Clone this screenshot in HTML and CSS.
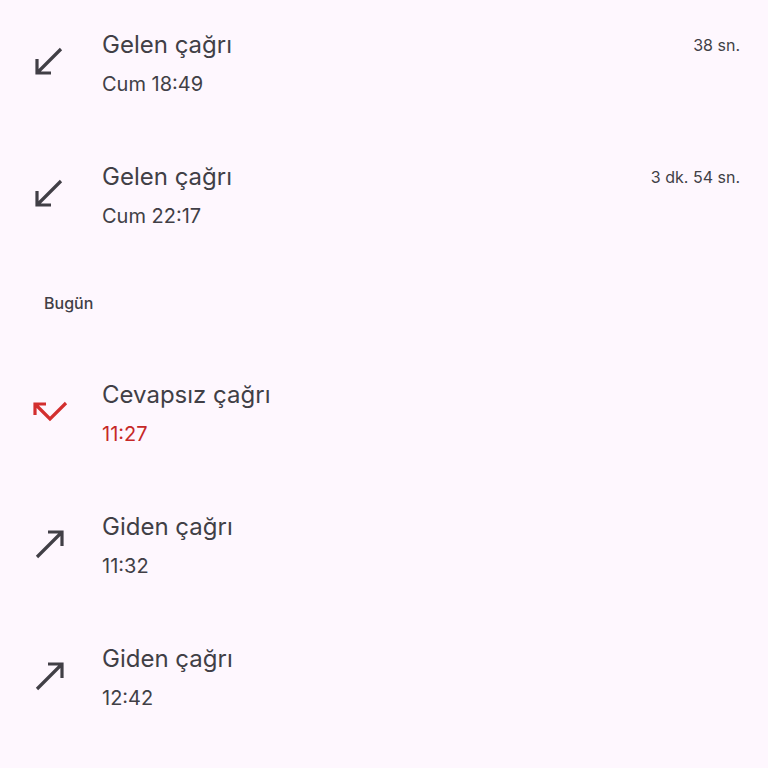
FILE: index.html
```html
<!DOCTYPE html>
<html lang="tr">
<head>
    <meta charset="UTF-8">
    <meta name="viewport" content="width=device-width, initial-scale=1.0">
    <title>Arama geçmişi</title>
    <link rel="stylesheet" href="styles.css">
</head>
<body>

<ul class="call-list">
    <li class="call">
        <svg class="call-icon" viewBox="0 0 36 36"><path d="M29 5 L5 29 M5 15 V29 H19"/></svg>
        <div class="call-text">
            <div class="call-title">Gelen çağrı</div>
            <div class="call-time">Cum 18:49</div>
        </div>
        <div class="call-duration">38 sn.</div>
    </li>
    <li class="call">
        <svg class="call-icon" viewBox="0 0 36 36"><path d="M29 5 L5 29 M5 15 V29 H19"/></svg>
        <div class="call-text">
            <div class="call-title">Gelen çağrı</div>
            <div class="call-time">Cum 22:17</div>
        </div>
        <div class="call-duration">3 dk. 54 sn.</div>
    </li>
</ul>

<h2 class="section-title">Bugün</h2>

<ul class="call-list">
    <li class="call missed">
        <svg class="call-icon" viewBox="0 0 36 36"><path d="M3 10 L18 25 L34 9 M14 10 H3 V21"/></svg>
        <div class="call-text">
            <div class="call-title">Cevapsız çağrı</div>
            <div class="call-time">11:27</div>
        </div>
    </li>
    <li class="call">
        <svg class="call-icon" viewBox="0 0 36 36"><path d="M5 31 L30 6 M16 6 H30 V20"/></svg>
        <div class="call-text">
            <div class="call-title">Giden çağrı</div>
            <div class="call-time">11:32</div>
        </div>
    </li>
    <li class="call">
        <svg class="call-icon" viewBox="0 0 36 36"><path d="M5 31 L30 6 M16 6 H30 V20"/></svg>
        <div class="call-text">
            <div class="call-title">Giden çağrı</div>
            <div class="call-time">12:42</div>
        </div>
    </li>
</ul>

</body>
</html>
```

FILE: styles.css
```css
body {
    margin: 0;
    background-color: #fef7fe;
    font-family: Inter, Roboto, sans-serif;
    color: #413f46;
}
.call-list {
    list-style: none;
    margin: 0;
    padding: 0;
}
.call-list:first-child {
    margin-top: -4px;
}
.call {
    display: flex;
    align-items: center;
    height: 132px;
    padding: 0 28px 0 32px;
}
.call-icon {
    width: 36px;
    height: 36px;
    margin-right: 34px;
    fill: none;
    stroke: #413f46;
    stroke-width: 3.2;
}
.call-text {
    flex: 1;
    margin-top: 2px;
}
.call-title {
    font-size: 24px;
    line-height: 32px;
}
.call-time {
    font-size: 20px;
    line-height: 28px;
    margin-top: 9px;
}
.call-duration {
    align-self: flex-start;
    margin-top: 39px;
    font-size: 16px;
}
.missed .call-icon {
    stroke: #d32f2f;
}
.missed .call-time {
    color: #c62828;
}
.section-title {
    margin: 0;
    height: 86px;
    padding-left: 44px;
    display: flex;
    align-items: center;
    font-size: 16px;
    font-weight: 500;
}
```
